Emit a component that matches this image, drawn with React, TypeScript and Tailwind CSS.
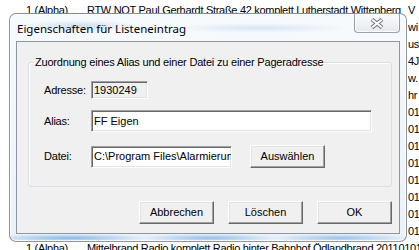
import React from "react";

const rightCol = ["wi", "us", "4J", "w.", "hr", "01", "01", "01", "01", "01", "01", "01", "01"];

function Btn({ children, className = "" }: { children: React.ReactNode; className?: string }) {
  return (
    <div
      className={
        "flex h-[23px] w-[75px] items-center justify-center border border-t-[#ffffff] border-l-[#ffffff] border-r-[#696969] border-b-[#696969] bg-[#f0f0f0] shadow-[inset_-1px_-1px_0_#a0a0a0,inset_1px_1px_0_#e3e3e3] " +
        className
      }
    >
      {children}
    </div>
  );
}

export default function App() {
  return (
    <div className="relative h-[250px] w-[419px] overflow-hidden bg-white font-['Liberation_Sans',Arial,sans-serif] text-[11px] leading-[13px] text-black">
      {/* background list */}
      <div className="mt-[2px] flex flex-col whitespace-nowrap tracking-[-0.3px]">
        <div className="flex h-[17px] items-center">
          <span className="w-[87px] shrink-0 pl-[26px]">1 (Alpha)</span>
          <span className="w-[321px] shrink-0 overflow-hidden">RTW NOT Paul Gerhardt Straße 42 komplett Lutherstadt Wittenberg</span>
          <span>V</span>
        </div>
        {rightCol.map((t, i) => (
          <div key={i} className="flex h-[17px] items-center">
            <span className="w-[408px] shrink-0" />
            <span>{t}</span>
          </div>
        ))}
        <div className="flex h-[17px] items-center">
          <span className="w-[87px] shrink-0 pl-[26px]">1 (Alpha)</span>
          <span>Mittelbrand Radio komplett Radio hinter Bahnhof Ödlandbrand 20110101</span>
        </div>
      </div>

      {/* window */}
      <div className="absolute left-[9px] top-[13px] flex h-[229px] w-[398px] flex-col rounded-[7px] border border-[rgba(60,70,85,0.55)] bg-[#edf3f9] bg-[radial-gradient(ellipse_60px_6px_at_70px_12px,rgba(160,190,225,0.45),transparent),radial-gradient(ellipse_90px_5px_at_250px_14px,rgba(170,198,228,0.4),transparent),radial-gradient(ellipse_80px_4px_at_60px_224px,rgba(110,170,230,0.8),transparent),radial-gradient(ellipse_70px_4px_at_200px_224px,rgba(110,170,230,0.7),transparent),radial-gradient(ellipse_70px_4px_at_330px_224px,rgba(120,175,230,0.7),transparent),linear-gradient(180deg,#f7fafd,#eaf1f8)] px-[6px] pb-[7px] shadow-[inset_0_0_0_1px_rgba(255,255,255,0.75)]">
        {/* title bar */}
        <div className="relative flex h-[27px] shrink-0 items-center pl-[1px] pt-[2px] font-['Noto_Sans',sans-serif] text-[11.5px] text-black">
          <span>Eigenschaften für Listeneintrag</span>
          <div className="absolute right-[0px] top-[-1px] flex h-[20px] w-[46px] items-center justify-center rounded-b-[4px] rounded-t-[2px] border border-[rgba(80,90,105,0.55)] bg-[linear-gradient(180deg,#fbfcfd,#e4e9ef)] shadow-[inset_0_0_0_1px_rgba(255,255,255,0.8)]">
            <svg width="14" height="11" viewBox="0 0 14 11">
              <g strokeLinecap="butt">
                <path d="M2 1.5 L12 9.5 M12 1.5 L2 9.5" stroke="#6e747c" strokeWidth="4" />
                <path d="M2.3 1.8 L11.7 9.2 M11.7 1.8 L2.3 9.2" stroke="#ffffff" strokeWidth="2" />
              </g>
            </svg>
          </div>
        </div>

        {/* client area */}
        <div className="flex flex-1 flex-col border border-[#8d97a3] bg-[#f0f0f0] pl-[11px] pr-[7px]">
          <fieldset className="mt-[13px] rounded-[3px] border border-[#d5dfe5] pb-[18px] shadow-[inset_1px_1px_0_#ffffff]">
            <legend className="ml-[5px] px-[1px] leading-[14px] tracking-[-0.2px]">
              Zuordnung eines Alias und einer Datei zu einer Pageradresse
            </legend>
            <div className="mt-[12px] flex h-[18px] items-center">
              <span className="w-[62px] shrink-0 pl-[15px] tracking-[-0.2px]">Adresse:</span>
              <div className="flex h-[18px] w-[57px] items-center border border-t-[#a0a0a0] border-l-[#a0a0a0] border-r-white border-b-white bg-[#f0f0f0] pl-[2px] shadow-[inset_1px_1px_0_#696969,inset_-1px_-1px_0_#e3e3e3]">
                1930249
              </div>
            </div>
            <div className="mt-[11px] flex h-[22px] items-center">
              <span className="w-[62px] shrink-0 pl-[15px] tracking-[-0.2px]">Alias:</span>
              <div className="flex h-[22px] w-[281px] items-center border border-t-[#a0a0a0] border-l-[#a0a0a0] border-r-white border-b-white bg-white pl-[2px] shadow-[inset_1px_1px_0_#696969,inset_-1px_-1px_0_#e3e3e3]">
                FF Eigen
              </div>
            </div>
            <div className="mt-[13px] flex h-[23px] items-center">
              <span className="w-[62px] shrink-0 pl-[15px] tracking-[-0.2px]">Datei:</span>
              <div className="flex h-[22px] w-[141px] items-center overflow-hidden whitespace-nowrap border border-t-[#a0a0a0] border-l-[#a0a0a0] border-r-white border-b-white bg-white pl-[2px] shadow-[inset_1px_1px_0_#696969,inset_-1px_-1px_0_#e3e3e3]">
                C:\Program Files\Alarmierung
              </div>
              <Btn className="ml-[18px]">Auswählen</Btn>
            </div>
          </fieldset>
          <div className="mt-[14px] flex justify-end gap-[14px]">
            <Btn>Abbrechen</Btn>
            <Btn>Löschen</Btn>
            <Btn>OK</Btn>
          </div>
        </div>
      </div>
    </div>
  );
}
